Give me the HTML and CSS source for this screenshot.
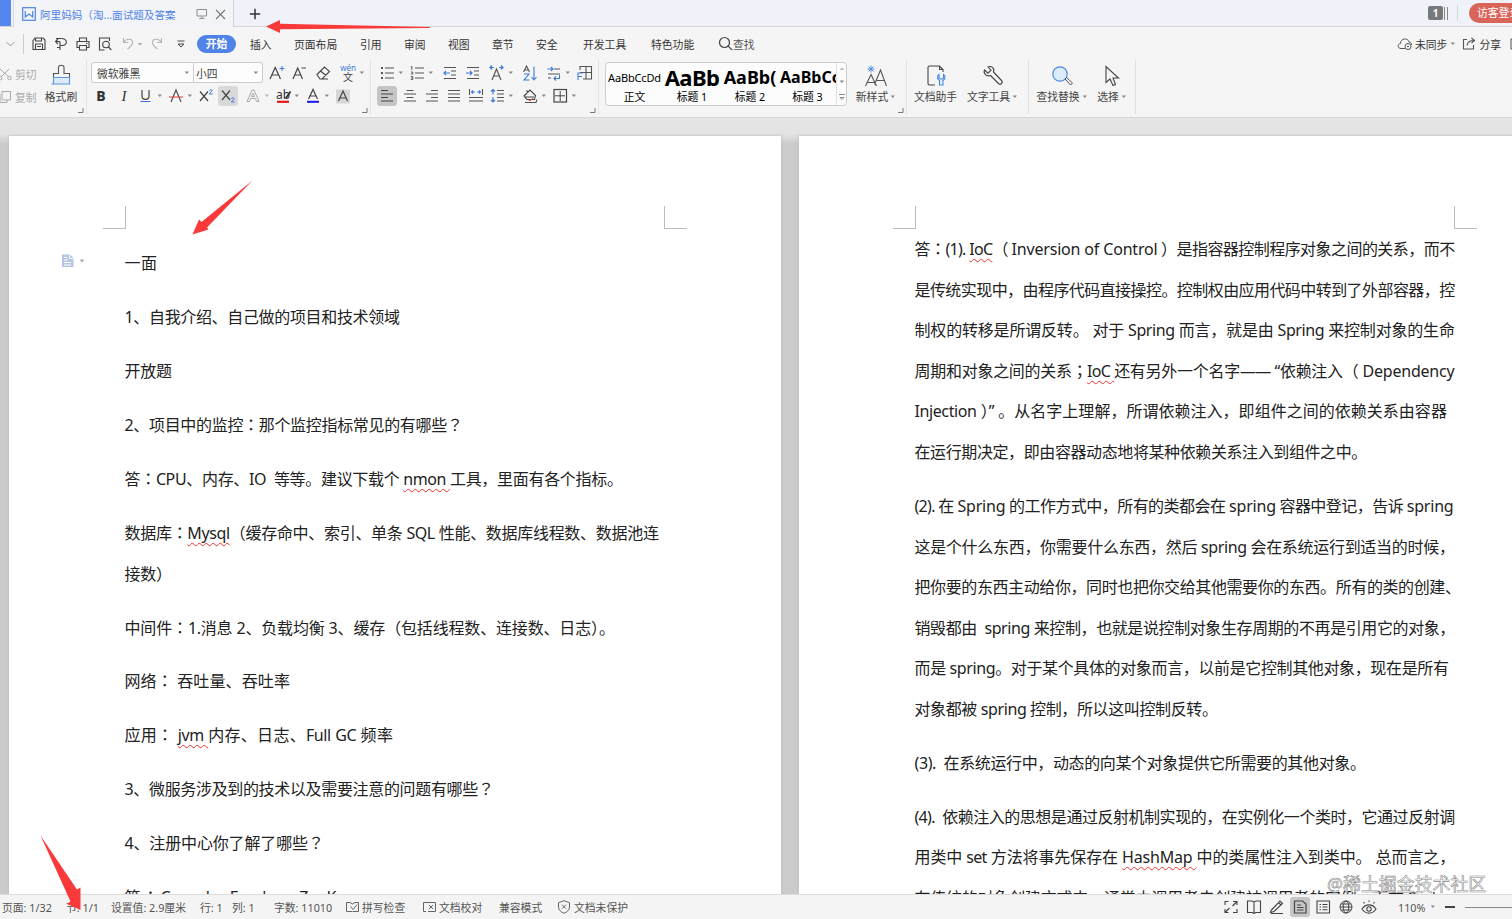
FILE: index.html
```
<!DOCTYPE html>
<html lang="zh-CN">
<head>
<meta charset="utf-8">
<title>阿里妈妈（淘...面试题及答案</title>
<link rel="stylesheet" href="styles.css">
</head>
<body>
<svg class="defs" width="0" height="0">
  <symbol id="dd" viewBox="0 0 6 4"><path d="M.6.5h4.4L2.8 3z" fill="#888"/></symbol>
  <symbol id="corner" viewBox="0 0 6 6"><path d="M5 0v4.5H0" fill="none" stroke="#777"/></symbol>
</svg>
<div class="app">
  <header class="tabs">
    <div class="home"></div>
    <div class="tab">
      <svg class="wlogo" width="14" height="14" fill="none" stroke="#4f83e6" stroke-width="1.2"><rect x=".7" y=".7" width="12.6" height="12.6"/><path d="M3.3 4v6l3.7-3 3.7 3V4"/></svg>
      <span class="title">阿里妈妈（淘...面试题及答案</span>
      <svg class="mon" width="12" height="12" fill="none" stroke="#8d8f93"><path d="M1 1.5h9.5v6.5H1zM5.8 8v2.5M3.3 10.5h5"/></svg>
      <svg class="cls" width="11" height="11" fill="none" stroke="#777" stroke-width="1.1"><path d="M1 1l9 9M10 1l-9 9"/></svg>
    </div>
    <svg class="plus" width="12" height="12" stroke="#333" stroke-width="1.5"><path d="M6 .8v10.4M.8 6h10.4"/></svg>
    <div class="acct">
      <span class="count">1</span><i class="stack"></i><i class="sep"></i><span class="login">访客登录</span>
    </div>
  </header>

  <nav class="menu">
    <div class="quick">
      <svg width="20" height="16" fill="none" stroke="#999"><path d="M6.500 6l4 4 4-4"/></svg>
      <i></i>
      <svg width="16" height="16" fill="none" stroke="#444" stroke-width="1.1"><path d="M2 4.500L4 2h8l2 2v9.500H2zM4.500 2v3h6V2M4.500 13.500V8h7v5.500M6 10.500h4"/></svg>
      <svg width="16" height="16" fill="none" stroke="#444" stroke-width="1.100"><path d="M3 5.500h4M3 2.500h5c7 0 7 7 1 7H7M5 3L2.500 5.500 5 8M7 5.500v8.500M4 11.500h3"/></svg>
      <svg width="16" height="16" fill="none" stroke="#444" stroke-width="1.100"><path d="M4.500 5.500V2h7v3.500M4 11.500H2v-6h12v6h-2M4.500 9.500h7v4.500h-7zM11 7.500h1.500"/></svg>
      <svg width="16" height="16" fill="none" stroke="#444" stroke-width="1.100"><path d="M12.500 5V2h-10v12h5"/><circle cx="9" cy="8.500" r="3.300"/><path d="M11.500 11l2.800 3"/></svg>
      <svg width="22" height="16" fill="none" stroke="#b5b5b5" stroke-width="1.100"><path d="M2.500 2v4.500H7M2.500 6.500C5 2.500 11 2 11.500 6c.2 2.500-2 5-5 7"/><path d="M16.500 7h5l-2.500 2.600z" fill="#aaa" stroke="none"/></svg>
      <svg width="16" height="16" fill="none" stroke="#b5b5b5" stroke-width="1.100"><path d="M12.500 2v4.500H8M12.500 6.500C10 2.500 4 2 3.500 6c-.2 2.500 2 5 5 7"/></svg>
      <svg width="14" height="16" fill="none" stroke="#444"><path d="M3.500 5h7M4 8h6l-3 3z"/></svg>
    </div>
    <div class="items">
      <b>开始</b><span>插入</span><span>页面布局</span><span>引用</span><span>审阅</span><span>视图</span><span>章节</span><span>安全</span><span>开发工具</span><span>特色功能</span>
      <span class="find"><svg width="15" height="15" fill="none" stroke="#444" stroke-width="1.200"><circle cx="6.500" cy="6.500" r="5"/><path d="M10.200 10.200l4 4"/></svg>查找</span>
    </div>
    <div class="sync">
      <svg width="16" height="14" fill="none" stroke="#555"><path d="M8 11.500H4C.3 11.500.3 7 3.500 6.500 3.500 1 11 .5 12 5c2 .3 2.500 1.500 2.500 3"/><circle cx="11" cy="9.500" r="3"/><path d="M10 9.500h2"/></svg>
      <span class="st">未同步</span><svg class="ar" width="6" height="4"><use href="#dd"/></svg>
      <svg width="14" height="14" fill="none" stroke="#555" stroke-width="1.100"><path d="M5 2.500H1.500v9.500h10V8M5 8.500C5.500 5 8 3.500 12 3.500M9.500 1l3 2.500-3 2.500"/></svg>
      <span class="sh">分享</span>
      <svg width="10" height="14" fill="none" stroke="#555"><path d="M10 2H2v10h8"/></svg>
    </div>
  </nav>

  <section class="ribbon">
    <div class="group clip">
      <div class="mini dim">
        <div><svg width="12" height="14" fill="none" stroke="#aaa"><path d="M0 2l9 8M9 2L1 10"/><circle cx="0" cy="11" r="2"/><circle cx="9.500" cy="11" r="1.800"/></svg>剪切</div>
        <div><svg width="12" height="14" fill="none" stroke="#aaa"><path d="M2 1.500h8.500v8.500H2zM0 4v8.500h7V10"/></svg>复制</div>
      </div>
      <div class="big brush">
        <svg width="22" height="22" fill="none" stroke="#555" stroke-width="1.100"><path d="M3.500 13.500h16v6.500h-16z" fill="#dcebfa" stroke="none"/><path d="M19.500 13v7h-18M3 13.500h16.500M3.500 13.500V20" stroke="#5c94de"/><path d="M3.500 13v-3.500h5V3.500c0-3 5.500-3 5.500 0v6h5.500V13"/></svg>
        <span>格式刷</span>
      </div>
      <svg class="cr" width="6" height="6"><use href="#corner"/></svg>
    </div>

    <div class="group font">
      <div class="r1">
        <div class="combo"><span>微软雅黑</span><svg width="6" height="4"><use href="#dd"/></svg></div>
        <div class="combo size"><span>小四</span><svg width="6" height="4"><use href="#dd"/></svg></div>
        <svg width="20" height="20" fill="none" stroke="#444" stroke-width="1.200"><path d="M3 16L8.200 4.500 13.500 16M5 12h6.500"/><path d="M12.500 5.500h5M15 3v5" stroke="#3e7bd6" stroke-width="1"/></svg>
        <svg width="20" height="20" fill="none" stroke="#444" stroke-width="1.200"><path d="M4 16L8.700 5 13.500 16M5.800 12h6M12.500 5h4.500"/></svg>
        <svg width="20" height="20" fill="none" stroke="#444" stroke-width="1.100"><path d="M4 11.500L11.500 4l5 4.500L9 16H7zM7.500 8l5.500 4.500M9 16h6"/></svg>
        <div class="ic"><svg width="20" height="20"><text class="wen" x="10" y="7.500">wén</text><text class="wz" x="10" y="17.500">文</text></svg><svg width="6" height="4"><use href="#dd"/></svg></div>
      </div>
      <div class="r2">
        <span class="g bold">B</span>
        <span class="g ital">I</span>
        <div class="ic"><svg width="20" height="20" fill="none" stroke="#444" stroke-width="1.200"><path d="M6 4v6c0 4.500 7 4.500 7 0V4"/><path d="M4.500 15.500h10" stroke="#3e6fe0" stroke-width="1"/></svg><svg width="6" height="4"><use href="#dd"/></svg></div>
        <div class="ic"><svg width="20" height="20" fill="none" stroke="#444" stroke-width="1.100"><path d="M5 16L10 4l5 12"/><path d="M3 11h14" stroke="#e04848"/></svg><svg width="6" height="4"><use href="#dd"/></svg></div>
        <svg width="20" height="20" fill="none" stroke="#444" stroke-width="1.200"><path d="M4 5.500l8 9.500M12 5.500L4 15"/><path d="M13.500 5c.3-2 3-1.500 2.500 0L13.300 8h3.500" stroke="#3e6fe0" stroke-width=".9"/></svg>
        <svg class="on" width="20" height="20" fill="none" stroke="#444" stroke-width="1.200"><path d="M4 4.500l8 9.500M12 4.500L4 14"/><path d="M13.500 13c.3-2 3-1.500 2.500 0l-2.700 3h3.500" stroke="#3e6fe0" stroke-width=".9"/></svg>
        <div class="ic"><svg width="20" height="20" fill="none" stroke="#aaa"><path d="M4 15.500L9 4h2l5 11.500h-2.500l-1-3h-5l-1 3zM8.500 10.500h3L10 7z"/></svg><svg width="6" height="4" opacity=".6"><use href="#dd"/></svg></div>
        <div class="ic"><svg width="20" height="20"><text class="ab" x="3" y="13">ab</text><path d="M17.500 5.500L13 12" stroke="#333" stroke-width="1.800"/><path d="M4 15.800h12" stroke="#e01818" stroke-width="2.200"/></svg><svg width="6" height="4"><use href="#dd"/></svg></div>
        <div class="ic"><svg width="20" height="20" fill="none" stroke="#444" stroke-width="1.200"><path d="M5.500 13L10 3.500 14.500 13M7 10h6"/><path d="M4 15.800h12" stroke="#1a1af0" stroke-width="2"/></svg><svg width="6" height="4"><use href="#dd"/></svg></div>
        <svg width="20" height="20" fill="none" stroke="#444" stroke-width="1.200"><path d="M3 3.500h14v14H3z" fill="#d6d6d6" stroke="none"/><path d="M5.500 15L10 5l4.500 10M7 12h6"/></svg>
      </div>
      <svg class="cr" width="6" height="6"><use href="#corner"/></svg>
    </div>

    <div class="group para">
      <div class="r1">
        <div class="ic"><svg width="20" height="20" fill="none" stroke="#555" stroke-width="1.200"><path d="M8 5h9M8 10h9M8 15h9"/><path d="M4 5h2M4 10h2M4 15h2" stroke-width="2"/></svg><svg width="6" height="4"><use href="#dd"/></svg></div>
        <div class="ic"><svg width="20" height="20" fill="none" stroke="#555" stroke-width="1.200"><path d="M8 5h9M8 10h9M8 15h9"/><path d="M4.800 3v4M3.800 4h1M3.800 9h2v2h-2M3.800 13.500h2v3h-2M4 15h2" stroke-width=".9"/></svg><svg width="6" height="4"><use href="#dd"/></svg></div>
        <svg width="20" height="20" fill="none" stroke="#555" stroke-width="1.200"><path d="M4 4.500h12M11 8h5M11 12h5M4 15.500h12"/><path d="M10 10H4M6 8l-2 2 2 2" stroke="#3e7bd6"/></svg>
        <svg width="20" height="20" fill="none" stroke="#555" stroke-width="1.200"><path d="M4 4.500h12M11 8h5M11 12h5M4 15.500h12"/><path d="M3 10h6M7 8l2 2-2 2" stroke="#3e7bd6"/></svg>
        <div class="ic"><svg width="20" height="20" fill="none" stroke="#555" stroke-width="1.200"><path d="M5 17l4.500-11L14 17M6.500 13h6"/><path d="M3 4.500h4M5 2.500l-2 2 2 2M12 4.500h4M14 2.500l2 2-2 2" stroke="#3e7bd6"/></svg><svg width="6" height="4"><use href="#dd"/></svg></div>
        <svg width="20" height="20" fill="none" stroke="#555" stroke-width="1.100"><path d="M3.500 9L6.500 3l3 6M4.500 7h4"/><path d="M4 11h5l-5 6h5.500M14 3.500V17M11.500 14l2.500 3 2.500-3" stroke="#3e7bd6"/></svg>
        <div class="ic"><svg width="20" height="20" fill="none" stroke="#555" stroke-width="1.100"><path d="M10 6h6M4 11h12"/><path d="M3.500 6H9M7 4l2 2-2 2M15.500 12v3.500H10M12 13.500l-2 2 2 2" stroke="#3e7bd6"/><path d="M4 15h3"/></svg><svg width="6" height="4"><use href="#dd"/></svg></div>
        <svg width="20" height="20" fill="none" stroke="#555" stroke-width="1.100"><path d="M5 7V3.500h11.500v12.500H8M11 3.500V16M5 9.500h11.500"/><path d="M3 17v-7h5M3 13.500h4" stroke="#3e7bd6"/></svg>
      </div>
      <div class="r2">
        <svg class="on dark" width="20" height="20" stroke="#444" stroke-width="1.200"><path d="M4 4.500h7M4 8h12M4 11.500h7M4 15h12"/></svg>
        <svg width="20" height="20" stroke="#555" stroke-width="1.200"><path d="M6.500 4.500h7M4 8h12M6.500 11.500h7M4 15h12"/></svg>
        <svg width="20" height="20" stroke="#555" stroke-width="1.200"><path d="M9 4.500h7M4 8h12M9 11.500h7M4 15h12"/></svg>
        <svg width="20" height="20" stroke="#555" stroke-width="1.200"><path d="M4 4.500h12M4 8h12M4 11.500h12M4 15h12"/></svg>
        <svg width="20" height="20" fill="none" stroke="#555" stroke-width="1.100"><path d="M3.500 3v6M16.500 3v6M3 11.500h14M3 15h14"/><path d="M5.500 6h3.500M7 4.500L5.500 6 7 7.500M11 6h3.500M13 4.500L14.500 6 13 7.500" stroke="#3e7bd6"/></svg>
        <div class="ic"><svg width="20" height="20" fill="none" stroke="#555" stroke-width="1.200"><path d="M10 4.500h7M10 8h7M10 11.500h7M10 15h7"/><path d="M6 3.500v5M4 5.500l2-2 2 2M6 11v5M4 14l2 2 2-2" stroke="#3e7bd6"/></svg><svg width="6" height="4"><use href="#dd"/></svg></div>
        <div class="ic"><svg width="20" height="20" fill="none" stroke="#444" stroke-width="1.100"><path d="M4 10l6-6 5.500 5.500-1 4H7zM8 6L6.500 4.500M5 11h9"/><path d="M5 16.500h11l1-3" stroke="#555"/><path d="M9 15l4-2.500" stroke="#e04848"/></svg><svg width="6" height="4"><use href="#dd"/></svg></div>
        <div class="ic"><svg width="20" height="20" fill="none" stroke="#444" stroke-width="1.200"><rect x="4" y="3.500" width="12.500" height="12.500"/><path d="M10.200 5v10M5 9.800h10" stroke-width="1"/></svg><svg width="6" height="4"><use href="#dd"/></svg></div>
      </div>
      <svg class="cr" width="6" height="6"><use href="#corner"/></svg>
    </div>

    <div class="group styles">
      <div class="gallery">
        <div class="s0"><p>AaBbCcDd</p><span>正文</span></div>
        <div class="s1"><p>AaBb</p><span>标题 1</span></div>
        <div class="s2"><p>AaBb(</p><span>标题 2</span></div>
        <div class="s3"><p>AaBbCc</p><span>标题 3</span></div>
        <div class="scroll">
          <svg width="6" height="4"><path d="M.5 3h5L3 .5z" fill="#bbb"/></svg><svg width="6" height="4"><use href="#dd"/></svg><svg width="8" height="8" fill="none" stroke="#888"><path d="M1 1.500h6M2 4.500h4L4 6.500z"/></svg>
        </div>
      </div>
      <div class="big newst">
        <svg width="24" height="24" fill="none" stroke="#555" stroke-width="1.100"><path d="M1.500 22L7 10.500 12.500 22M3.500 18.500h7M10.500 20.500L16.500 6l6 16M12.500 16.500h8"/><path d="M7 1.500v7M3.500 5h7M4.500 2.500l5 5M9.500 2.500l-5 5" stroke="#4a86e0" stroke-width=".9"/></svg>
        <span>新样式<svg width="6" height="4"><use href="#dd"/></svg></span>
      </div>
      <svg class="cr" width="6" height="6"><use href="#corner"/></svg>
    </div>

    <div class="group tools">
      <div class="big"><svg width="22" height="24" fill="none" stroke="#444" stroke-width="1.100"><path d="M10 21H4.500c-1 0-1.500-.5-1.500-1.500v-16C3 2.500 3.500 2 4.500 2h10L18 5.500V8M14.500 2v3.500H18"/><path d="M14 10.500c-2.500 2-1.500 5 .5 6V21h3.500v-4.500c2-1 3-4 .5-6v3.500l-1.200 1h-2l-1.300-1z" fill="#e3effb" stroke="#4a86e0"/></svg><span>文档助手</span></div>
      <div class="big"><svg width="22" height="24" fill="none" stroke="#444" stroke-width="1.100"><path d="M6 3c3-1.500 7 1 5.500 5l8 8.500c2 2-1 5-3 3L8.500 11.500C4.500 13 1 9.500 2.500 6L6 9.200l3-3z"/></svg><span>文字工具<svg width="6" height="4"><use href="#dd"/></svg></span></div>
    </div>

    <div class="group find2">
      <div class="big"><svg width="22" height="24" fill="none" stroke="#555"><circle cx="9" cy="10" r="7.200" fill="#dcebfa" stroke="#4a86e0" stroke-width="1.200"/><path d="M14 15l1.500-1.500 6 5.500-1.800 2z"/></svg><span>查找替换<svg width="6" height="4"><use href="#dd"/></svg></span></div>
      <div class="big"><svg width="22" height="24" fill="none" stroke="#444" stroke-width="1.100"><path d="M5 2.500v16l4-3.500 3 6.500 2.500-1-2.500-6.500h5.500z"/></svg><span>选择<svg width="6" height="4"><use href="#dd"/></svg></span></div>
    </div>
  </section>

  <main class="desk">
    <article class="page left">
      <div class="marks"><i class="ml"></i><i class="mr"></i></div>
      <svg class="paste" width="26" height="16"><path d="M1 1.500h8l3.500 3.500v9H1z" fill="#b4c6e4"/><path d="M3 4.500h3M3 7h4M3 9.500h7M3 12h7M8.500 2v3.500H12" stroke="#fff" fill="none"/><path d="M18.500 6.500h5l-2.500 3z" fill="#aaa"/></svg>
      <div class="text">
        <p><span style="width:32px">一面</span></p>
        <p><span style="width:275px">1、自我介绍、自己做的项目和技术领域</span></p>
        <p><span style="width:47px">开放题</span></p>
        <p><span style="width:338px">2、项目中的监控<b lang="ja">：</b>那个监控指标常见的有哪些<b lang="ja">？</b></span></p>
        <p><span style="width:498px">答<b lang="ja">：</b>CPU、内存、IO&nbsp; 等等。建议下载个 <u>nmon </u>工具，里面有各个指标。</span></p>
        <p><span style="width:534px">数据库<b lang="ja">：</b><u>Mysql</u>（缓存命中、索引、单条 SQL 性能、数据库线程数、数据池连</span><span style="width:47px">接数）</span></p>
        <p><span style="width:490px">中间件<b lang="ja">：</b>1.消息 2、负载均衡 3、缓存（包括线程数、连接数、日志）。</span></p>
        <p><span style="width:165px">网络<b lang="ja">：</b>&nbsp;吞吐量、吞吐率</span></p>
        <p><span style="width:268px">应用<b lang="ja">：</b>&nbsp;<u>jvm </u>内存、日志、Full GC 频率</span></p>
        <p><span style="width:369px">3、微服务涉及到的技术以及需要注意的问题有哪些<b lang="ja">？</b></span></p>
        <p><span style="width:199px">4、注册中心你了解了哪些<b lang="ja">？</b></span></p>
        <p><span style="width:253px">答<b lang="ja">：</b>Consul、Eureka、ZooKeeper</span></p>
      </div>
    </article>
    <article class="page right">
      <div class="marks"><i class="ml"></i><i class="mr"></i></div>
      <div class="text">
        <p><span class="tight" style="width:540px">答<b lang="ja">：</b>(1). <u>IoC</u>（ <em>Inversion of Control</em> ）是指容器控制程序对象之间的关系，而不</span>
        <span class="tight" style="width:540px">是传统实现中，由程序代码直接操控。控制权由应用代码中转到了外部容器，控</span>
        <span style="width:540px">制权的转移是所谓反转。 对于 Spring 而言，就是由 Spring 来控制对象的生命</span>
        <span class="tight" style="width:540px">周期和对象之间的关系<b lang="ja">；</b><u>IoC </u>还有另外一个名字—— “依赖注入（ <em>Dependency</em></span>
        <span style="width:532px">Injection ）” 。从名字上理解，所谓依赖注入，即组件之间的依赖关系由容器</span>
        <span style="width:452px">在运行期决定，即由容器动态地将某种依赖关系注入到组件之中。</span></p>
        <p><span class="tight" style="width:539px">(2). 在 <em>Spring</em> 的工作方式中，所有的类都会在 <em>spring</em> 容器中登记，告诉 <em>spring</em></span>
        <span style="width:540px">这是个什么东西，你需要什么东西，然后 spring 会在系统运行到适当的时候，</span>
        <span style="width:546px">把你要的东西主动给你，同时也把你交给其他需要你的东西。所有的类的创建、</span>
        <span style="width:540px">销毁都由&nbsp; spring 来控制，也就是说控制对象生存周期的不再是引用它的对象，</span>
        <span style="width:534px">而是 spring。对于某个具体的对象而言，以前是它控制其他对象，现在是所有</span>
        <span style="width:303px">对象都被 spring 控制，所以这叫控制反转。</span></p>
        <p><span style="width:451px">(3).&nbsp; 在系统运行中，动态的向某个对象提供它所需要的其他对象。</span></p>
        <p><span class="tight" style="width:540px">(4).&nbsp; 依赖注入的思想是通过反射机制实现的，在实例化一个类时，它通过反射调</span>
        <span class="tight" style="width:540px">用类中 set 方法将事先保存在 <u><em>HashMap</em> </u>中的类属性注入到类中。 总而言之，</span>
        <span style="width:540px">在传统的对象创建方式中，通常由调用者去创建被调用者的实例，而在 Spring</span></p>
      </div>
    </article>
    <div class="watermark">@稀土掘金技术社区</div>
  </main>

  <footer class="status">
    <div class="info">
      <span>页面: 1/32</span><span>节: 1/1</span><span>设置值: 2.9厘米</span><span>行: 1</span><span>列: 1</span><span>字数: 11010</span>
      <span><svg width="16" height="14" fill="none" stroke="#666"><path d="M7 11.500H1.500v-9H5L7.500 4 10 2.500M7.500 11.500h6V2.500H10M5.500 6.500l2.500 3 4-5"/></svg>拼写检查</span>
      <span><svg width="16" height="14" fill="none" stroke="#666"><path d="M4 11.500H1.500v-9H5M5 2.500h8.500v9H6M7 5l4 4M11 5L7 9"/></svg>文档校对</span>
      <span>兼容模式</span>
      <span><svg width="16" height="14" fill="none" stroke="#666"><path d="M7 .7l5.500 2V7c0 3-2.500 5-5.500 6.300C4 12 1.500 10 1.500 7V2.700zM5 4.700l4 4M9 4.700l-4 4"/></svg>文档未保护</span>
    </div>
    <div class="views">
      <svg width="20" height="20" fill="none" stroke="#444" stroke-width="1.100"><path d="M4 8V4.500h3.500M12 4.500h4V8M16 12v3.500h-4M7.500 15.500H4V12M11.500 9L16 4.500M8.500 11L4 15.500"/></svg>
      <svg width="20" height="20" fill="none" stroke="#444" stroke-width="1.100"><path d="M10 5v11M3.500 4H8l2 1 2-1h4.500v11.500H12l-2 .8-2-.8H3.500z"/></svg>
      <svg width="20" height="20" fill="none" stroke="#444" stroke-width="1.100"><path d="M4 13.500L13 4l2.500 2.500L7 14.500l-3.500 1zM11.500 5.500L14 8M4 16.500h12"/></svg>
      <svg class="on dark" width="20" height="20" fill="none" stroke="#444" stroke-width="1.200"><path d="M4.500 4h8L16 7v9H4.500zM7 8h4M7 10.500h6.500M7 13h6.500"/></svg>
      <svg width="20" height="20" fill="none" stroke="#444" stroke-width="1.100"><path d="M4 4h12.500v12H4zM6.500 7.500H8M9.500 7.500h5M6.500 10H8M9.500 10h5M6.500 12.700H8M9.500 12.700h5"/></svg>
      <svg width="20" height="20" fill="none" stroke="#444"><circle cx="10" cy="10" r="6"/><ellipse cx="10" cy="10" rx="2.800" ry="6"/><path d="M4 10h12M5 7h10M5 13h10"/></svg>
      <svg width="20" height="20" fill="none" stroke="#444" stroke-width="1.100"><path d="M3 12c3.500-5.500 10.500-5.500 14 0-3.500 5.500-10.500 5.500-14 0zM10 5V3.500M5.500 6.500l-1-1.500M14.500 6.500l1-1.500"/><circle cx="10" cy="12" r="2.200"/></svg>
    </div>
    <div class="zoom"><span>110%</span><svg width="6" height="4"><use href="#dd"/></svg><i class="minus"></i><i class="track"></i></div>
  </footer>

  <svg class="arrows" width="1512" height="919" fill="#fa3a3a">
    <path d="M266 26.500L280 20v3.800L430 27v1L280 29.300V33z"/>
    <path d="M252.500 180.500L207 227.500l1.500 2L192.500 234.500 199 219.500l2.500 2.500z"/>
    <path d="M40.500 835.500L77 889.500l3.500-2L80.500 910 67 904l3.500-2.500z"/>
  </svg>
</div>
</body>
</html>
```
FILE: styles.css
```
* { box-sizing: border-box; }
body { margin: 0; font-family: "Noto Sans", "Noto Sans CJK SC", sans-serif; font-size: 10.8px; color: #444; overflow: hidden; }
svg { display: block; flex: none; overflow: visible; }
i { display: block; flex: none; }
em { font-style: normal; }
p { margin: 0; }
.defs { position: absolute; }
.app { position: relative; width: 1512px; height: 919px; overflow: hidden; display: flex; flex-direction: column; white-space: nowrap; }

/* document tabs */
.tabs { height: 27px; flex: none; display: flex; background: #eff3f9; border-bottom: 1px solid #d3d5d9; }
.home { width: 11px; height: 26px; background: #5586ef; }
.tab { width: 221px; height: 27px; margin-left: 2px; display: flex; align-items: center; padding: 1px 0 0 8px; background: #f3f4f8; border-left: 1px solid #ddd; border-right: 1px solid #cfd1d6; }
.tab .title { width: 156px; margin-left: 4px; color: #4f83e6; font-size: 10.6px; }
.tab .cls { margin-left: 7px; }
.plus { margin: 8px 0 0 15px; }
.acct { margin-left: auto; display: flex; align-items: center; flex: none; width: 84px; }
.count { flex: none; width: 15px; height: 14px; line-height: 14px; text-align: center; color: #fff; background: #77787a; border-radius: 2px; font-size: 10px; font-weight: bold; }
.stack { width: 4px; height: 13px; margin-left: 1px; border-left: 1px solid #888; border-right: 1px solid #888; }
.sep { width: 1px; height: 16px; background: #d5d7da; margin: 0 11px 0 9px; }
.login { flex: none; width: 70px; height: 20px; line-height: 19px; padding-left: 8px; border-radius: 10px; background: #d8645a; color: #fff; }

/* menu */
.menu { height: 33px; flex: none; display: flex; align-items: center; background: #f5f5f5; color: #333; }
.quick { flex: none; width: 197px; display: grid; grid-template-columns: 23px 8px 22px 22px 22px 24px 28px 25px 16px; align-items: center; }
.quick i { width: 1px; height: 20px; background: #ccc; }
.items { flex: none; width: 1200px; display: grid; grid-template-columns: 53px 44px 66px 44px 44px 44px 44px 47px 68px 67px 60px; align-items: center; }
.items b { width: 39px; height: 18px; line-height: 17px; text-align: center; border-radius: 9px; background: #4f83e6; color: #fff; }
.find { display: flex; align-items: center; color: #555; }
.sync { display: flex; align-items: center; flex: none; }
.st { margin-left: 2px; }
.ar { margin: 0 6px 0 3px; }
.sh { margin: 0 8px 0 3px; }

/* ribbon */
.ribbon { height: 58px; flex: none; display: flex; background: #f5f5f5; border-bottom: 1px solid #d6d6d6; }
.group { position: relative; height: 54px; border-right: 1px solid #e2e2e2; flex: none; }
.cr { position: absolute; right: 2px; bottom: 0; }
.clip { width: 87px; display: flex; }
.mini { width: 45px; display: grid; grid-template-rows: 23px 23px; padding-top: 2px; align-items: center; color: #aaa; }
.mini div { display: flex; align-items: center; gap: 3px; }
.big { display: flex; flex-direction: column; align-items: center; padding-top: 4px; }
.big > span { display: flex; align-items: center; gap: 2px; line-height: 14px; }
.big > svg { height: 24px; margin-bottom: 2px; }
.brush { width: 32px; }
.font { width: 284px; padding-left: 4px; }
.r1, .r2 { display: grid; align-items: center; }
.r1 { height: 21px; margin-top: 2px; margin-bottom: 3px; }
.r2 { height: 20px; }
.ic { display: flex; align-items: center; gap: 1px; }
.font .r1 { grid-template-columns: 103px 73px 22px 24px 25px 26px; }
.font .r2 { grid-template-columns: 23px 22px 30px 30px 22px 25px 30px 30px 30px 20px; }
.combo { height: 21px; display: flex; align-items: center; justify-content: space-between; padding: 0 3px 0 5px; background: #fdfdfd; border: 1px solid #ccc; border-radius: 3px 0 0 3px; }
.combo.size { width: 69px; padding-left: 2px; border-left: 0; border-radius: 0 3px 3px 0; }
.wen { fill: #3e7bd6; font-size: 8px; text-anchor: middle; }
.wz { fill: #444; font-size: 10px; text-anchor: middle; }
.ab { fill: #333; font-size: 12px; }
.g { width: 20px; text-align: center; line-height: 20px; color: #333; }
.bold { font-size: 14px; font-weight: 800; }
.ital { font: italic 15px/20px "Liberation Serif", serif; }
.on { background: #d9d9d9; border-radius: 3px; }
.on.dark { background: #c6c6c6; }
.para { width: 228px; padding-left: 6px; }
.para .r1 { grid-template-columns: 30px 33px 23px 24px 33px 24px 31px 20px; }
.para .r2 { grid-template-columns: 23px 22px 22px 22px 21px 33px 30px 30px; }
.styles { width: 308px; display: flex; padding-left: 6px; }
.gallery { width: 242px; height: 44px; margin-top: 2px; display: grid; grid-template-columns: 57px 58px 58px 57px 10px; background: #fcfcfc; border: 1px solid #ccc; border-radius: 4px; color: #000; }
.gallery > div { overflow: hidden; text-align: center; }
.gallery p { height: 27px; line-height: 29px; }
.gallery span { display: block; line-height: 14px; }
.s0 p { font-size: 11px; letter-spacing: -.15px; }
.s1 p { font-size: 22px; font-weight: bold; letter-spacing: -.6px; }
.s2 p { font-size: 18px; font-weight: bold; }
.s3 p { font-size: 16px; font-weight: bold; text-align: left; padding-left: 1px; }
.gallery .scroll { display: flex; flex-direction: column; justify-content: space-around; align-items: center; border-left: 1px solid #e2e2e2; }
.newst { width: 58px; }
.tools { width: 122px; display: flex; }
.tools .big { width: 57px; }
.find2 { width: 107px; display: flex; padding-left: 4px; }
.find2 .big:first-child { width: 58px; }
.find2 .big:last-child { width: 42px; }

/* document area */
.desk { height: 776px; flex: none; display: flex; gap: 18px; padding: 18px 0 0 9px; background: linear-gradient(#e6e6e6 0, #e3e3e3 16px, #cbcbcb 26px); overflow: hidden; position: relative; }
.page { position: relative; height: 900px; flex: none; background: #fff; box-shadow: 0 0 3px #bbb; color: #222; }
.left { width: 772px; padding-left: 115.5px; padding-top: 107px; }
.right { width: 790px; padding-left: 115.5px; padding-top: 93px; }
.marks { position: absolute; left: 94px; top: 70px; width: 584px; display: flex; justify-content: space-between; }
.marks i { width: 23px; height: 23px; border-bottom: 1px solid #bbb; }
.marks .ml { border-right: 1px solid #bbb; }
.marks .mr { border-left: 1px solid #bbb; }
.paste { position: absolute; left: 52px; top: 117px; }
.text { font-size: 16px; letter-spacing: -.4px; }
.text p { margin-bottom: 13.4px; }
.text span { display: block; height: 40.6px; line-height: 40.6px; text-align: justify; text-align-last: justify; }
.text .tight { letter-spacing: -.7px; }
.text em { letter-spacing: -.2px; }
.text b { font-family: "Noto Sans CJK JP", sans-serif; font-weight: normal; line-height: 1; }
.text u { text-decoration: underline wavy #e33 1px; text-underline-offset: 3px; text-decoration-skip-ink: none; }
.watermark { position: absolute; left: 1327px; top: 753px; font-size: 17.9px; line-height: 26px; color: #fff; -webkit-text-stroke: .6px #8c8c8c; }

/* status bar */
.status { height: 25px; flex: none; display: flex; align-items: center; background: #f4f4f4; border-top: 1px solid #dcdcdc; color: #555; }
.info { flex: none; width: 1221px; padding-left: 2px; display: grid; grid-template-columns: 64px 45px 89px 32px 42px 71px 77px 77px 58px 90px; }
.info span { display: flex; align-items: center; gap: 1px; }
.views { flex: none; width: 177px; display: grid; grid-template-columns: repeat(7, 23px); }
.zoom { flex: none; display: flex; align-items: center; }
.zoom span { width: 32px; }
.minus { width: 10px; height: 1.5px; margin: 0 10px 0 9px; background: #444; }
.track { width: 60px; height: 1px; background: #888; }
.arrows { position: absolute; left: 0; top: 0; pointer-events: none; }
```
